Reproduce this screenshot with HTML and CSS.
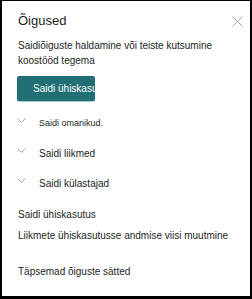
FILE: index.html
```html
<!DOCTYPE html>
<html lang="et">
<head>
    <meta charset="UTF-8">
    <meta name="viewport" content="width=device-width, initial-scale=1.0">
    <title>Õigused</title>
    <link rel="stylesheet" href="styles.css">
</head>
<body>

<div class="panel">
    <div class="header">
        <div class="title">Õigused</div>
        <div class="close" title="Sulge">
            <svg width="11" height="11" viewBox="0 0 11 11">
                <path d="M0.5 0.5 L10.5 10.5 M10.5 0.5 L0.5 10.5" stroke="#a6a6a6" stroke-width="1" fill="none"/>
            </svg>
        </div>
    </div>

    <p class="intro">Saidiõiguste haldamine või teiste kutsumine koostööd tegema</p>

    <div class="share-button">Saidi ühiskasutus</div>

    <div class="groups">
        <div class="group">
            <svg class="chevron" width="9" height="5" viewBox="0 0 9 5">
                <polyline points="0.5,0.5 4.5,4.5 8.5,0.5" stroke="#a6a6a6" stroke-width="1" fill="none"/>
            </svg>
            <span class="small">Saidi omanikud.</span>
        </div>
        <div class="group">
            <svg class="chevron" width="9" height="5" viewBox="0 0 9 5">
                <polyline points="0.5,0.5 4.5,4.5 8.5,0.5" stroke="#a6a6a6" stroke-width="1" fill="none"/>
            </svg>
            <span>Saidi liikmed</span>
        </div>
        <div class="group">
            <svg class="chevron" width="9" height="5" viewBox="0 0 9 5">
                <polyline points="0.5,0.5 4.5,4.5 8.5,0.5" stroke="#a6a6a6" stroke-width="1" fill="none"/>
            </svg>
            <span>Saidi külastajad</span>
        </div>
    </div>

    <div class="link first">Saidi ühiskasutus</div>
    <div class="link">Liikmete ühiskasutusse andmise viisi muutmine</div>
    <div class="link advanced">Täpsemad õiguste sätted</div>
</div>

</body>
</html>
```

FILE: styles.css
```css
html, body {
    margin: 0;
    padding: 0;
    background-color: #fff;
}
body {
    font-family: "Liberation Sans", Arial, sans-serif;
    font-size: 10px;
    line-height: 15px;
    color: #201f1e;
}
.panel {
    box-sizing: border-box;
    height: 100vh;
    border-style: solid;
    border-color: #000;
    border-width: 1px 2px 3px 2px;
    padding: 11px 7px 0 16px;
}
.header {
    display: flex;
    justify-content: space-between;
    align-items: center;
}
.title {
    font-size: 13px;
    line-height: 18px;
}
.close {
    width: 11px;
    height: 11px;
    cursor: pointer;
}
.close svg {
    display: block;
}
.intro {
    margin: 8px 0 0 0;
    padding-right: 1px;
}
.share-button {
    width: 62px;
    height: 25px;
    line-height: 25px;
    margin: 8px 0 0 -1px;
    padding: 0 0 0 16px;
    background-color: #1f6f75;
    color: #fff;
    border-radius: 2px;
    white-space: nowrap;
    overflow: hidden;
    box-shadow: 0 1px 0 #a8c7c9;
}
.groups {
    margin: 15px 0 0 -1px;
}
.group {
    display: flex;
    align-items: flex-start;
    height: 30px;
}
.chevron {
    display: block;
    margin-top: 2px;
    margin-right: 13px;
}
.group .small {
    font-size: 9px;
}
.link {
    margin-top: 6px;
}
.link.first {
    margin-top: 1px;
}
.link.advanced {
    margin-top: 21px;
}
```
